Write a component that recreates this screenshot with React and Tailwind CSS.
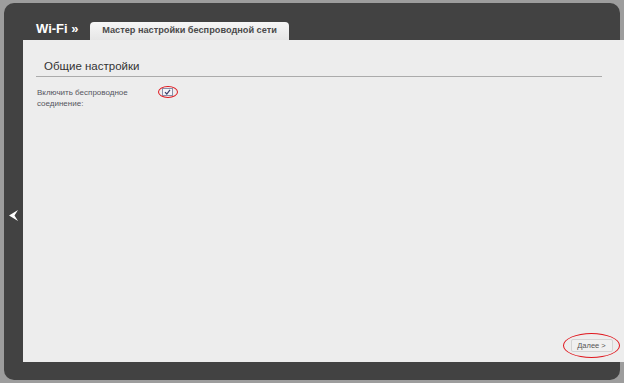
export default function App() {
  return (
    <div className="w-[624px] h-[383px] bg-[#9d9d9d] overflow-hidden pt-[3px] pl-[4px]" style={{ fontFamily: '"Liberation Sans", Arial, sans-serif' }}>
      <div className="relative w-[616px] h-[377px] rounded-[10px] bg-[#424242] flex flex-col">
        <div className="h-[37px] flex items-end shrink-0">
          <div className="pl-[32px] pb-[4px] w-[86px] shrink-0 text-white font-bold text-[13px] leading-[14px] whitespace-nowrap">Wi-Fi »</div>
          <div className="h-[18px] w-[199px] shrink-0 rounded-t-[4px] bg-gradient-to-b from-[#f6f6f6] to-[#e6e6e6] flex items-center justify-center text-[9.2px] font-bold text-[#4a4a4a] whitespace-nowrap">
            Мастер настройки беспроводной сети
          </div>
        </div>
        <div className="ml-[19px] w-[601px] h-[322px] bg-[#ededed] relative">
          <div className="pl-[21px] pt-[19px] text-[11.5px] leading-[14px] text-[#333333]">Общие настройки</div>
          <div className="ml-[13px] mr-[22px] mt-[3px] border-t border-[#ababab]"></div>
          <div className="flex pl-[14px] pt-[10px]">
            <div className="w-[125px] text-[8px] leading-[11px] text-[#555560]">
              Включить беспроводное<br />соединение:
            </div>
            <div className="relative mt-[1px]">
              <div className="absolute -left-[4px] -top-[2px] w-[20px] h-[12px] rounded-[50%] border-[1.5px] border-[#e0161d]"></div>
              <div className="w-[11px] h-[8px] border border-[#8a8fa8] bg-[#f4f4f8] flex items-center justify-center">
                <svg width="7" height="6" viewBox="0 0 7 6"><path d="M1 3.2 L2.8 5 L6 0.8" fill="none" stroke="#3a3f6a" strokeWidth="1.2" /></svg>
              </div>
            </div>
          </div>
          <div className="absolute right-[4px] bottom-[4px] w-[57px] h-[25px] rounded-[50%] border-[1.5px] border-[#e0161d] flex items-center justify-center">
            <div className="w-[42px] h-[13px] border border-[#d4d4d4] bg-[#f0f0f0] rounded-[2px] flex items-center justify-center text-[7.5px] text-[#555555]">Далее &gt;</div>
          </div>
        </div>
        <svg className="absolute left-[5px] top-[207px]" width="9" height="11" viewBox="0 0 9 11">
          <polygon points="9,0 0,5.5 9,11 5.5,5.5" fill="#ffffff" />
        </svg>
      </div>
    </div>
  );
}
